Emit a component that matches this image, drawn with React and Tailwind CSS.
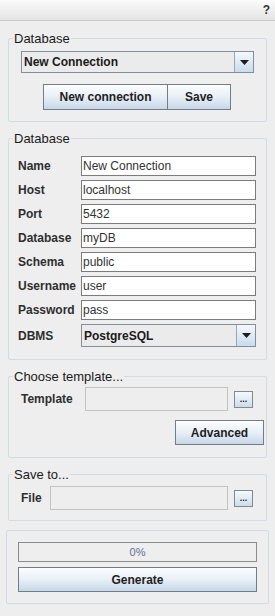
import React from 'react';

const font = { fontFamily: '"Liberation Sans", Arial, sans-serif' };

const btn =
  'border border-[#737d87] bg-gradient-to-b from-[#fcfdfe] via-[#e8eff6] to-[#c6d8e9] text-[#1e1e1e] font-bold text-[12px] flex items-center justify-center';

const Arrow = () => (
  <svg width="9" height="5" viewBox="0 0 9 5">
    <path d="M0 0 L9 0 L4.5 5 Z" fill="#1c1c1c" />
  </svg>
);

const Combo = ({ value, className }) => (
  <div className={`flex border border-[#7f8ea0] bg-[#ebebeb] ${className}`}>
    <div className="flex-1 flex items-center pl-[2px] text-[12px] font-bold text-[#1a1a1a]">{value}</div>
    <div className="w-[19px] border-l border-[#9aa6b3] bg-gradient-to-b from-[#f5f8fb] to-[#cadbec] flex items-center justify-center">
      <Arrow />
    </div>
  </div>
);

// titled border, legend sits on the top line
const Panel = ({ title, className, inner, children }) => (
  <fieldset className={`border border-[#d3dbe2] rounded-[2px] ${className}`}>
    {title && (
      <legend className="ml-[4px] px-[1px] text-[13px] leading-[15px] text-[#1a1a1a]">{title}</legend>
    )}
    <div className={inner}>{children}</div>
  </fieldset>
);

const Field = ({ label, value }) => (
  <div className="flex items-center h-[20px]">
    <div className="w-[63px] text-[12px] font-bold text-[#2e2e2e]">{label}</div>
    <div className="w-[175px] h-[20px] border border-[#7c7c7c] bg-white flex items-center pl-[1px] text-[12px] text-[#333333]">
      {value}
    </div>
  </div>
);

const Dots = () => (
  <div className="w-[19px] h-[17px] border border-[#7d8b99] bg-gradient-to-b from-[#f7f9fc] to-[#cddcea] flex items-end justify-center pb-[3px] text-[9px] leading-none font-bold text-[#222]">
    ...
  </div>
);

export default function App() {
  const rows = [
    ['Name', 'New Connection'],
    ['Host', 'localhost'],
    ['Port', '5432'],
    ['Database', 'myDB'],
    ['Schema', 'public'],
    ['Username', 'user'],
    ['Password', 'pass'],
  ];

  return (
    <div className="w-[275px] h-[616px] bg-[#eeeeee] flex flex-col" style={font}>
      <div className="h-[21px] border-b border-[#c9c9c9] bg-gradient-to-b from-[#fbfbfb] to-[#e4e4e4] flex items-center justify-end pr-[5px]">
        <span className="text-[12px] font-bold text-[#333]">?</span>
      </div>

      <div className="flex flex-col px-[8px] pt-[10px]">
        {/* connection picker */}
        <Panel title="Database" className="w-[259px]" inner="px-[12px] pt-[5px] pb-[11px]">
          <Combo value="New Connection" className="w-[233px] h-[22px]" />
          <div className="flex mt-[11px] ml-[22px]">
            <div className={`${btn} w-[125px] h-[26px]`}>New connection</div>
            <div className={`${btn} w-[63px] h-[26px] border-l-0`}>Save</div>
          </div>
        </Panel>

        {/* connection details */}
        <Panel title="Database" className="w-[259px] mt-[9px]" inner="pl-[9px] pt-[10px] pb-[12px]">
          <div className="flex flex-col gap-[4px]">
            {rows.map(([l, v]) => (
              <Field key={l} label={l} value={v} />
            ))}
            <div className="flex items-center h-[23px]">
              <div className="w-[63px] text-[12px] font-bold text-[#2e2e2e]">DBMS</div>
              <Combo value="PostgreSQL" className="w-[175px] h-[23px]" />
            </div>
          </div>
        </Panel>

        <Panel title="Choose template..." className="w-[259px] mt-[9px]" inner="pt-[3px] pb-[12px]">
          <div className="flex items-center pl-[12px]">
            <div className="w-[64px] text-[12px] font-bold text-[#2e2e2e]">Template</div>
            <div className="w-[143px] h-[24px] border border-[#c3c3c3] bg-[#eeeeee]" />
            <div className="ml-[6px]">
              <Dots />
            </div>
          </div>
          <div className="flex justify-end pr-[2px] mt-[9px]">
            <div className={`${btn} w-[89px] h-[25px]`}>Advanced</div>
          </div>
        </Panel>

        <Panel title="Save to..." className="w-[259px] mt-[9px]" inner="pt-[4px] pb-[10px]">
          <div className="flex items-center pl-[12px]">
            <div className="w-[29px] text-[12px] font-bold text-[#2e2e2e]">File</div>
            <div className="w-[178px] h-[24px] border border-[#c3c3c3] bg-[#eeeeee]" />
            <div className="ml-[6px]">
              <Dots />
            </div>
          </div>
        </Panel>

        <Panel className="w-[262px] -ml-[2px] mt-[9px]" inner="px-[11px] pt-[11px] pb-[11px]">
          <div className="w-[239px] h-[20px] border border-[#8c8c8c] bg-[#eeeeee] flex items-center justify-center text-[11px] text-[#5b6f98]">
            0%
          </div>
          <div className={`${btn} w-[239px] h-[25px] mt-[5px]`}>Generate</div>
        </Panel>
      </div>
    </div>
  );
}
